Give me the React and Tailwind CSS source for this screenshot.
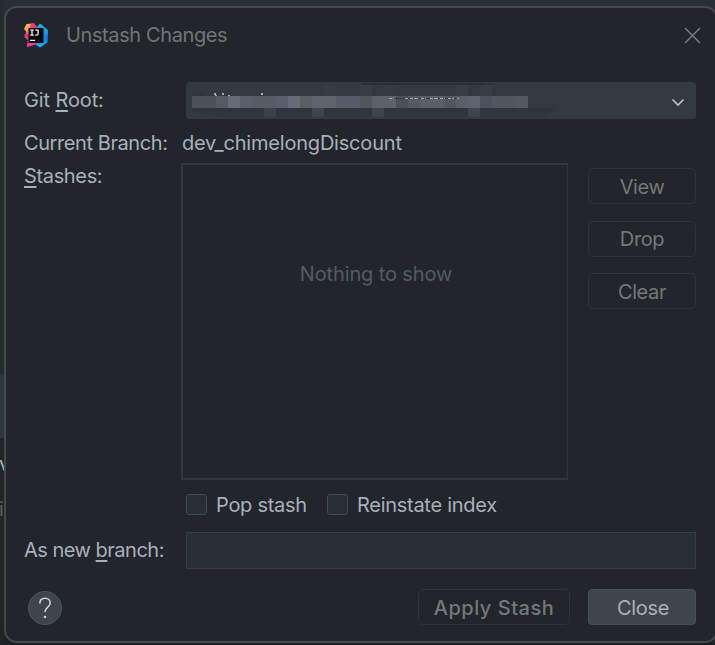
import React from "react";

const mosaic = [
  "#4b5159", "#4b5159", "#555a62", "#666b76", "#5a606b", "#575b63", "#575b63", "#5a5f6a",
  "#656b77", "#5a5e63", "#5f636b", "#5f636b", "#565c67", "#565c67", "#51555e", "#5d6269",
  "#5d6269", "#4a505b", "#555a61", "#5a5f68", "#5a5f68", "#525861", "#5a5f68", "#5e636d",
  "#4b525d", "#50575f", "#50575f", "#525961",
];

const lowerBlocks = [[264, "#3c414a"], [312, "#40444e"], [372, "#40444d"], [468, "#40444d"]];
const upperBlocks = [[324, "#363b44"], [360, "#3a3d43"], [384, "#353a43"], [456, "#3a3d44"], [480, "#393d44"]];

function Logo() {
  return (
    <svg className="block" width="24" height="25" viewBox="0 0 24 25">
      <defs>
        <linearGradient id="warm" x1="0" y1="0" x2="0.4" y2="1">
          <stop offset="0" stopColor="#f9d070" />
          <stop offset=".45" stopColor="#f6814c" />
          <stop offset="1" stopColor="#ef2d91" />
        </linearGradient>
        <linearGradient id="cool" x1="0" y1="0" x2="0" y2="1">
          <stop offset="0" stopColor="#22b8d8" />
          <stop offset=".6" stopColor="#127fe8" />
          <stop offset="1" stopColor="#21b5f5" />
        </linearGradient>
      </defs>
      <path d="M13 4 16 .5 24 7 23.5 19.5 16 24.5 9 20Z" fill="url(#cool)" />
      <path d="M2.5 1 10 .5 13 5 9 13 14 20.5 3 24 4 17 .5 14 2.5 9 0 6Z" fill="url(#warm)" />
      <path d="M7 0.5 10 .5 14 5H6Z" fill="#f1357e" />
      <path d="m3 24 1-6 10 2.5Z" fill="#f13d93" />
      <path d="M0 12 5 10v7Z" fill="#d92ba0" />
      <rect x="4.5" y="5" width="15" height="15" fill="#080609" />
      <path d="M6.3 7.1h3.5M8 7.1v5M6.3 12.1h3.5M11.3 7.1h2.8v3.7q0 1.3-1.3 1.3h-1.6M6 17.3h5" fill="none" stroke="#f4f2f4" strokeWidth="1.3" />
    </svg>
  );
}

function RedactedPath() {
  return (
    <svg className="block" width="380" height="36" viewBox="186 83 380 36" shapeRendering="crispEdges">
      <path d="M362 83h112l19 1v1H362Z" fill="#292d35" />
      <path d="M193 93h12v3h-12zM192 108h364l-10 9H222l-30-5Z" fill="#30343d" />
      {upperBlocks.map(([x, fill]) => <rect key={x} x={x} y="85" width="12" height="11" fill={fill} />)}
      {mosaic.map((fill, i) => <rect key={i} x={192 + i * 12} y="96" width="12" height="12" fill={fill} />)}
      {lowerBlocks.map(([x, fill]) => <rect key={x} x={x} y="108" width="12" height="9" fill={fill} />)}
      <path d="M214 93h2v2h-2zM215 95h2v1h-2zM222 93h2v2h-2zM228 95h2v1h-2zM261 93h2v2h-2z" fill="#a5abb4" />
      <path d="M394 98.5h65" stroke="#343942" />
      <path d="M389 98.5h5M405 98.5h3M410 98.5h8M421 98.5h5M430 98.5h8M440 98.5h5M448 98.5h6M457 98.5h2" stroke="#a0a5ac" strokeDasharray="3 .7" />
    </svg>
  );
}

function GhostButton({ children, className }) {
  return (
    <button className={`flex h-[36px] items-center justify-center rounded-[5px] border-[1.5px] border-[#2f333b] text-[#76777a] ${className}`}>
      {children}
    </button>
  );
}

function Check({ children, className }) {
  return (
    <label className={`flex items-center tracking-[-0.28px] ${className}`}>
      <span className="mr-[9px] mb-[2px] h-[21px] w-[21px] rounded-[3px] border border-[#444955] bg-[#292d35]" />
      {children}
    </label>
  );
}

export default function App() {
  return (
    <div className="flex h-[645px] w-[715px] overflow-hidden bg-[#292d36] font-['Inter',sans-serif] text-[20px] leading-[24px] text-[#a9b0bb]">
      <aside className="h-full w-[4px] shrink-0 bg-[#202328]">
        <div className="h-[375px] bg-[#262a31]" />
        <div className="h-[63px] bg-[#303440]" />
        <div className="mt-[14px] h-[24px] w-[4px] overflow-hidden"><span className="-ml-px">v</span></div>
        <div className="mt-[21px] h-[24px] w-[4px] overflow-hidden text-[#5c5f66]"><span className="-ml-px">i</span></div>
      </aside>
      <div className="h-full w-[711px] shrink-0 bg-gradient-to-b from-[#292d36] from-50% to-[#1d2024] to-50% pt-[6px]">
        <main className="h-[637px] w-[714px] rounded-[13px] border-2 border-[#46484c] bg-[#22252c] pl-[18px]">
          <header className="flex h-[74px] pt-[15px]">
            <Logo />
            <h1 className="ml-[18px] w-[618px] tracking-[-0.39px] text-[#737478]">Unstash Changes</h1>
            <svg className="mt-[4px] block" width="17" height="17" viewBox="0 0 17 17" fill="none" stroke="#777a7e" strokeWidth="1.5"><path d="m1 1 15 15M16 1 1 16" /></svg>
          </header>
          <div className="flex h-[49px]">
            <div className="w-[162px] pt-[6px] tracking-[-0.12px]">Git <span className="underline underline-offset-[3px]">R</span>oot:</div>
            <div className="flex h-[37px] w-[510px] items-center justify-between overflow-hidden rounded-[4px] bg-[#343841] pr-[11px]">
              <RedactedPath />
              <svg className="mt-[3px]" width="14" height="9" viewBox="0 0 14 9" fill="none" stroke="#b9bec9" strokeWidth="1.7"><path d="m1.5 1.5 5.5 5.5 5.5-5.5" /></svg>
            </div>
          </div>
          <div className="flex h-[32px]">
            <div className="w-[158px] tracking-[-0.42px]">Current Branch:</div>
            <div className="tracking-[-0.2px]">dev_chimelongDiscount</div>
          </div>
          <div className="flex h-[317px]">
            <div className="w-[157px] pt-px tracking-[-0.35px]"><span className="underline decoration-2 underline-offset-[3px]">S</span>tashes:</div>
            <div className="h-[317px] w-[387px] border-2 border-r border-[#33363d] pt-[97px] pl-[2px] text-center tracking-[-0.12px] text-[#555a64]">Nothing to show</div>
            <div className="ml-[20px] flex flex-col gap-[16.5px] pt-[5px] tracking-[-0.4px]">
              <GhostButton className="w-[108px] pt-[2px]">View</GhostButton>
              <GhostButton className="w-[108px] pt-px">Drop</GhostButton>
              <GhostButton className="w-[108px] pt-[2px]">Clear</GhostButton>
            </div>
          </div>
          <div className="flex h-[52px] pt-[13px] pl-[162px]">
            <Check className="h-[24px] w-[141px]">Pop stash</Check>
            <Check className="h-[24px]">Reinstate index</Check>
          </div>
          <div className="flex h-[57px]">
            <div className="w-[162px] pt-[6px] tracking-[-0.5px]">As new <span className="underline underline-offset-[3px]">b</span>ranch:</div>
            <input aria-label="As new branch" className="h-[37px] w-[510px] border border-[#383c44] bg-[#292d35]" />
          </div>
          <footer className="flex">
            <button className="mt-[2px] ml-[4px] mr-[356px] flex h-[34px] w-[34px] items-center justify-center rounded-full border border-[#50545c] bg-[#40444d]">
              <svg width="14" height="22" viewBox="0 0 14 22" fill="none" stroke="#cdd1d7" strokeWidth="1.6"><path d="M1.8 6.5C1.8 3 4 1.2 7 1.2s5.2 1.9 5.2 4.8C12.2 10 7 10.3 7 15" /><circle cx="7" cy="20" r="1.3" fill="#cdd1d7" stroke="none" /></svg>
            </button>
            <GhostButton className="w-[152px] pt-px font-medium tracking-[0.52px]">Apply Stash</GhostButton>
            <button className="ml-[18px] h-[36px] w-[108px] rounded-[4px] border border-[#4a4e57] bg-[#40444c] pt-px pl-[2px] tracking-[-0.3px]">Close</button>
          </footer>
        </main>
      </div>
    </div>
  );
}
